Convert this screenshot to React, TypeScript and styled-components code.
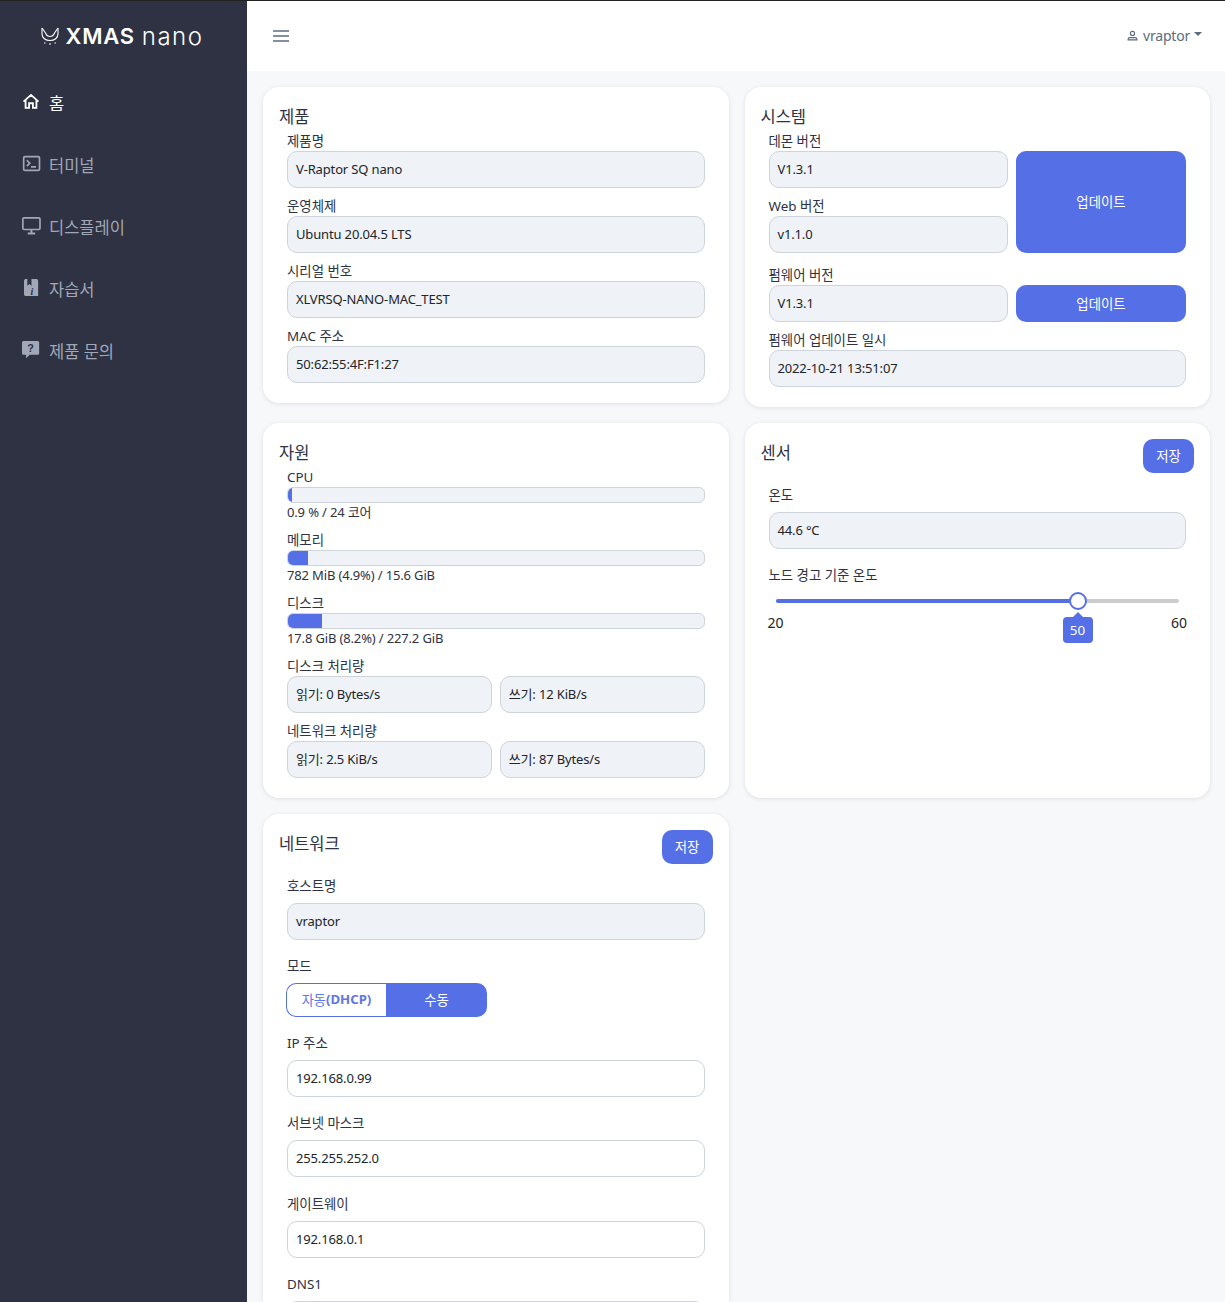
import React from "react";
import styled, { createGlobalStyle } from "styled-components";

const Global = createGlobalStyle`
  html, body { margin: 0; padding: 0; height: 100%; overflow: hidden; }
  * { box-sizing: border-box; }
  body { font-family: "Noto Sans", "Noto Sans CJK KR", sans-serif; font-size: 13.4px; color: #2e3243; background: #f7f8fa; }
`;
const Shell = styled.div`display: flex; height: 100vh; overflow: hidden; border-top: 1px solid #222;`;
const Sidebar = styled.aside`width: 247px; flex: none; background: #2e3243; display: flex; flex-direction: column;`;
const Logo = styled.div`height: 70px; display: flex; align-items: center; justify-content: center; gap: 7px; color: #fff; padding-right: 3px;`;
const LogoBold = styled.span`font-family: Inter, sans-serif; font-weight: 600; font-size: 22px; letter-spacing: 0.75px;`;
const LogoLight = styled.span`font-family: Inter, sans-serif; font-weight: 300; font-size: 24px; letter-spacing: 1.5px;`;
const Nav = styled.nav`display: flex; flex-direction: column; padding-top: 1px;`;
const NavItem = styled.a<{ $active?: boolean }>`
  height: 62px; display: flex; align-items: center; gap: 8px; padding-left: 21px;
  font-size: 16.5px; color: ${p => (p.$active ? "#fff" : "#a0a8b8")};
  svg { width: 20px; height: 20px; flex: none; margin-top: -2px; }
`;
const Main = styled.main`flex: 1; min-width: 0; display: flex; flex-direction: column;`;
const Topbar = styled.header`height: 70px; flex: none; background: #fff; display: flex; align-items: center; justify-content: space-between; padding: 0 23px 0 26px; color: #5c6b80;`;
const User = styled.div`display: flex; align-items: center; gap: 5px; font-size: 14px; letter-spacing: -0.2px; padding-bottom: 2px;`;
const Caret = styled.span`width: 0; height: 0; border-left: 4px solid transparent; border-right: 4px solid transparent; border-top: 4px solid #5c6b80; margin-bottom: 3px; margin-left: -1px;`;
const Content = styled.div`display: grid; grid-template-columns: 1fr 1fr; gap: 16px; padding: 16px 15px 0 16px; align-items: start;`;
const Card = styled.section<{ $stretch?: boolean }>`
  background: #fff; border-radius: 16px; padding: 16px; box-shadow: 0 1px 4px rgba(40, 50, 80, 0.12);
  ${p => (p.$stretch ? "align-self: stretch;" : "")}
`;
const CardHead = styled.div`display: flex; justify-content: space-between; align-items: flex-start; min-height: 34px;`;
const Title = styled.h2`margin: 0; font-weight: 400; font-size: 16.5px; line-height: 28px; color: #2e3243;`;
const Body = styled.div`padding: 0 8px 4px;`;
const Field = styled.div<{ $gap?: number }>`margin-top: ${p => p.$gap ?? 0}px;`;
const Label = styled.div<{ $wide?: boolean }>`font-size: 13.4px; line-height: 18px; padding: 1px 0; margin-bottom: ${p => (p.$wide ? 7 : 0)}px;`;
const Input = styled.div<{ $plain?: boolean }>`
  height: 37px; border: 1px solid #ced4dc; border-radius: 10px; background: ${p => (p.$plain ? "#fff" : "#eff2f6")};
  display: flex; align-items: center; padding: 0 8px 1px; font-size: 13px; line-height: 18px; letter-spacing: -0.15px; color: #212529;
`;
const Two = styled.div`display: grid; grid-template-columns: 1fr 1fr; gap: 8px;`;
const Primary = styled.div`background: #5570e6; color: #fff; border-radius: 10px; display: flex; align-items: center; justify-content: center; padding-bottom: 2px; font-size: 13.4px;`;
const UpdateButton = styled(Primary)`margin-top: 20px;`;
const SysRow = styled.div<{ $gap?: number }>`display: grid; grid-template-columns: 239px 170px; gap: 8px; justify-content: space-between; margin-top: ${p => p.$gap ?? 0}px;`;
const SysCol = styled.div`display: flex; flex-direction: column;`;
const Save = styled(Primary)`width: 51px; height: 34px;`;
const Bar = styled.div`height: 16px; background: #eff2f6; border: 1px solid #ced4dc; border-radius: 6px; overflow: hidden;`;
const Fill = styled.div`height: 100%; background: #5570e6;`;
const BarNote = styled.div`font-size: 13px; letter-spacing: -0.15px; line-height: 19px;`;
const SliderWrap = styled.div`position: relative; height: 64px; margin-top: 4px;`;
const Track = styled.div`position: absolute; left: 7px; right: 7px; top: 10px; height: 4px; background: #ccc; border-radius: 2px;`;
const TrackFill = styled.div`height: 100%; background: #5570e6; border-radius: 2px;`;
const Thumb = styled.div`position: absolute; top: 3px; width: 18px; height: 18px; margin-left: -9px; border-radius: 50%; background: #fff; border: 2px solid #5570e6;`;
const Tick = styled.span`position: absolute; top: 24px; font-size: 14px; color: #212529;`;
const Bubble = styled.div`
  position: absolute; top: 28px; width: 30px; height: 26px; margin-left: -15px; background: #5570e6; color: #fff;
  border-radius: 4px; font-size: 13.4px; display: flex; align-items: center; justify-content: center;
  &::before { content: ""; position: absolute; top: -5px; left: 10px; border-left: 5px solid transparent; border-right: 5px solid transparent; border-bottom: 5px solid #5570e6; }
`;
const Toggle = styled.div`display: flex; width: 201px; height: 34px; margin-left: -1px;`;
const ToggleOff = styled.div`flex: 0 0 100px; border: 1px solid #5570e6; border-right: 0; border-radius: 10px 0 0 10px; color: #5f76e8; display: flex; align-items: center; justify-content: center; padding-bottom: 2px; background: #fff; font-size: 13.2px;`;
const ToggleOn = styled.div`flex: 1; background: #5570e6; border-radius: 0 10px 10px 0; color: #fff; display: flex; align-items: center; justify-content: center; padding-bottom: 2px;`;
const Bold = styled.b`font-weight: 700;`;

const InfoField = ({ label, value, plain, gap, wide }: { label: string; value?: string; plain?: boolean; gap?: number; wide?: boolean }) => (
  <Field $gap={gap}>
    <Label $wide={wide}>{label}</Label>
    <Input $plain={plain}>{value}</Input>
  </Field>
);
const Usage = ({ label, pct, note, gap }: { label: string; pct: number; note: string; gap?: number }) => (
  <Field $gap={gap}>
    <Label>{label}</Label>
    <Bar><Fill style={{ width: `${pct}%` }} /></Bar>
    <BarNote>{note}</BarNote>
  </Field>
);

export default function App() {
  return (
    <>
      <Global />
      <Shell>
        <Sidebar>
          <Logo>
            <svg width="18" height="18" viewBox="0 0 18 18" fill="none" stroke="#fff" strokeWidth="1.1">
              <path d="M1 1v6c0 4 3.5 6.5 8 6.5s8-2.5 8-6.5V1" />
              <path d="M1 1l3.5 5c1 2.5 2.8 3.5 4.5 3.5s3.5-1 4.5-3.5L17 1" />
              <path d="M3 16h1.5M8 17h2M13.5 16H15" />
            </svg>
            <LogoBold>XMAS</LogoBold>
            <LogoLight>nano</LogoLight>
          </Logo>
          <Nav>
            <NavItem $active>
              <svg viewBox="0 0 24 24" fill="none" stroke="currentColor" strokeWidth="2.2"><path d="M3 11.5L12 3.5l9 8M5.5 10v9h4.2v-5.5h4.6V19h4.2v-9" /></svg>홈
            </NavItem>
            <NavItem>
              <svg viewBox="0 0 24 24" fill="none" stroke="currentColor" strokeWidth="2"><rect x="3.2" y="3.2" width="19" height="16.5" rx="1.5" /><path d="M7 7.5l3.5 3.5L7 14.5M12 15.5h6" /></svg>터미널
            </NavItem>
            <NavItem>
              <svg viewBox="0 0 24 24" fill="none" stroke="currentColor" strokeWidth="2"><rect x="2.2" y="2.2" width="20.6" height="14" rx="1.5" /><path d="M12.5 16v4M8 21h9" strokeWidth="2.4" /></svg>디스플레이
            </NavItem>
            <NavItem>
              <svg viewBox="0 0 24 24" fill="currentColor"><path d="M3.6 3.2a2 2 0 0 1 2-2h2v8l2.5-2 2.5 2v-8h6a2 2 0 0 1 2 2v18.4H5.6a2 2 0 0 1-2-2z" /><text x="13" y="20" fontSize="12" fontStyle="italic" fontWeight="700" fontFamily="Liberation Serif, serif" textAnchor="middle" fill="#2e3243">i</text></svg>자습서
            </NavItem>
            <NavItem>
              <svg viewBox="0 0 24 24" fill="currentColor"><path d="M3 1.2h17a1.8 1.8 0 0 1 1.8 1.8v13a1.8 1.8 0 0 1-1.8 1.8H10.5L6 22v-4.200H3A1.8 1.8 0 0 1 1.2 16V3A1.8 1.8 0 0 1 3 1.2z" /><text x="11.5" y="14.5" fontSize="13" fontWeight="700" fontFamily="Liberation Sans, sans-serif" textAnchor="middle" fill="#2e3243">?</text></svg>제품 문의
            </NavItem>
          </Nav>
        </Sidebar>
        <Main>
          <Topbar>
            <svg width="16" height="12" viewBox="0 0 16 12" stroke="#5c6b80" strokeWidth="1.4"><path d="M0 1h16M0 6h16M0 11h16" /></svg>
            <User>
              <svg width="11" height="11" viewBox="0 0 24 24" fill="none" stroke="#5c6b80" strokeWidth="2.5"><circle cx="12" cy="7.5" r="4.5" /><path d="M2.5 21.5v-2c0-2 2-3 4-3h11c2 0 4 1 4 3v2z" /></svg>
              vraptor<Caret />
            </User>
          </Topbar>
          <Content>
            <Card>
              <Title>제품</Title>
              <Body>
                <InfoField label="제품명" value="V-Raptor SQ nano" />
                <InfoField gap={8} label="운영체제" value="Ubuntu 20.04.5 LTS" />
                <InfoField gap={8} label="시리얼 번호" value="XLVRSQ-NANO-MAC_TEST" />
                <InfoField gap={8} label="MAC 주소" value="50:62:55:4F:F1:27" />
              </Body>
            </Card>
            <Card>
              <Title>시스템</Title>
              <Body>
                <SysRow>
                  <SysCol>
                    <InfoField label="데몬 버전" value="V1.3.1" />
                    <InfoField gap={8} label="Web 버전" value="v1.1.0" />
                  </SysCol>
                  <UpdateButton>업데이트</UpdateButton>
                </SysRow>
                <SysRow $gap={12}>
                  <InfoField label="펌웨어 버전" value="V1.3.1" />
                  <UpdateButton>업데이트</UpdateButton>
                </SysRow>
                <InfoField gap={8} label="펌웨어 업데이트 일시" value="2022-10-21 13:51:07" />
              </Body>
            </Card>
            <Card $stretch>
              <Title>자원</Title>
              <Body>
                <Usage label="CPU" pct={0.9} note="0.9 % / 24 코어" />
                <Usage gap={8} label="메모리" pct={4.9} note="782 MiB (4.9%) / 15.6 GiB" />
                <Usage gap={8} label="디스크" pct={8.2} note="17.8 GiB (8.2%) / 227.2 GiB" />
                <Field $gap={8}>
                  <Label>디스크 처리량</Label>
                  <Two><Input>읽기: 0 Bytes/s</Input><Input>쓰기: 12 KiB/s</Input></Two>
                </Field>
                <Field $gap={8}>
                  <Label>네트워크 처리량</Label>
                  <Two><Input>읽기: 2.5 KiB/s</Input><Input>쓰기: 87 Bytes/s</Input></Two>
                </Field>
              </Body>
            </Card>
            <Card $stretch>
              <CardHead><Title>센서</Title><Save>저장</Save></CardHead>
              <Body>
                <InfoField wide gap={12} label="온도" value="44.6 °C" />
                <Field $gap={16}>
                  <Label>노드 경고 기준 온도</Label>
                  <SliderWrap>
                    <Track><TrackFill style={{ width: "75%" }} /></Track>
                    <Thumb style={{ left: 309 }} />
                    <Tick style={{ left: -1 }}>20</Tick>
                    <Bubble style={{ left: 309 }}>50</Bubble>
                    <Tick style={{ right: -1 }}>60</Tick>
                  </SliderWrap>
                </Field>
              </Body>
            </Card>
            <Card>
              <CardHead><Title>네트워크</Title><Save>저장</Save></CardHead>
              <Body>
                <InfoField wide gap={12} label="호스트명" value="vraptor" />
                <Field $gap={16}>
                  <Label $wide>모드</Label>
                  <Toggle>
                    <ToggleOff>자동<Bold>(DHCP)</Bold></ToggleOff>
                    <ToggleOn>수동</ToggleOn>
                  </Toggle>
                </Field>
                <InfoField wide gap={16} plain label="IP 주소" value="192.168.0.99" />
                <InfoField wide gap={16} plain label="서브넷 마스크" value="255.255.252.0" />
                <InfoField wide gap={17} plain label="게이트웨이" value="192.168.0.1" />
                <InfoField wide gap={16} plain label="DNS1" />
              </Body>
            </Card>
          </Content>
        </Main>
      </Shell>
    </>
  );
}
